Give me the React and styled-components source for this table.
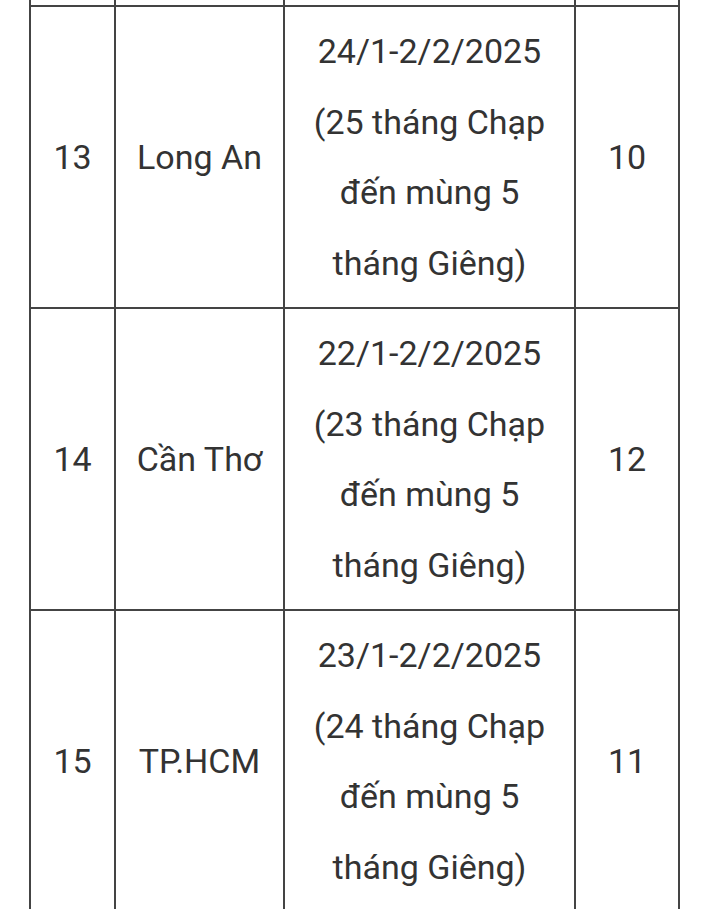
import React from "react";
import styled, { createGlobalStyle } from "styled-components";

const Global = createGlobalStyle`
  html, body { margin: 0; padding: 0; background: #ffffff; }
  body { font-family: Roboto, "Noto Sans", "Liberation Sans", sans-serif; }
`;

const Page = styled.div`
  width: 720px;
  height: 909px;
  overflow: hidden;
  background: #fff;
  padding: 0 0 0 29px;
  box-sizing: border-box;
`;

const Table = styled.table`
  border-collapse: separate;
  border-spacing: 0;
  border-left: 2px solid #444;
  table-layout: fixed;
  width: 651px;
  color: #333;
  font-family: Roboto, "Noto Sans", "Liberation Sans", sans-serif;
  font-size: 34px;
  line-height: 70.5px;
`;

const Cell = styled.td`
  border-right: 2px solid #444;
  border-bottom: 2px solid #444;
  padding: ${(p) => (p.$sliver ? "0" : "9px 10px")};
  height: ${(p) => (p.$sliver ? "7px" : "auto")};
  text-align: center;
  vertical-align: middle;
  box-sizing: border-box;
`;

const Col = styled.col`
  width: ${(p) => p.$w}px;
`;

const rows = [
  { no: 13, name: "Long An", date: "24/1-2/2/2025 (25 tháng Chạp đến mùng 5 tháng Giêng)", days: 10 },
  { no: 14, name: "Cần Thơ", date: "22/1-2/2/2025 (23 tháng Chạp đến mùng 5 tháng Giêng)", days: 12 },
  { no: 15, name: "TP.HCM", date: "23/1-2/2/2025 (24 tháng Chạp đến mùng 5 tháng Giêng)", days: 11 },
];

export default function App() {
  return (
    <>
      <Global />
      <Page>
        <Table>
          <colgroup>
            <Col $w={85} />
            <Col $w={169} />
            <Col $w={291} />
            <Col $w={104} />
          </colgroup>
          <tbody>
            <tr>
              <Cell $sliver />
              <Cell $sliver />
              <Cell $sliver />
              <Cell $sliver />
            </tr>
            {rows.map((r) => (
              <tr key={r.no}>
                <Cell>{r.no}</Cell>
                <Cell>{r.name}</Cell>
                <Cell>{r.date}</Cell>
                <Cell>{r.days}</Cell>
              </tr>
            ))}
          </tbody>
        </Table>
      </Page>
    </>
  );
}
